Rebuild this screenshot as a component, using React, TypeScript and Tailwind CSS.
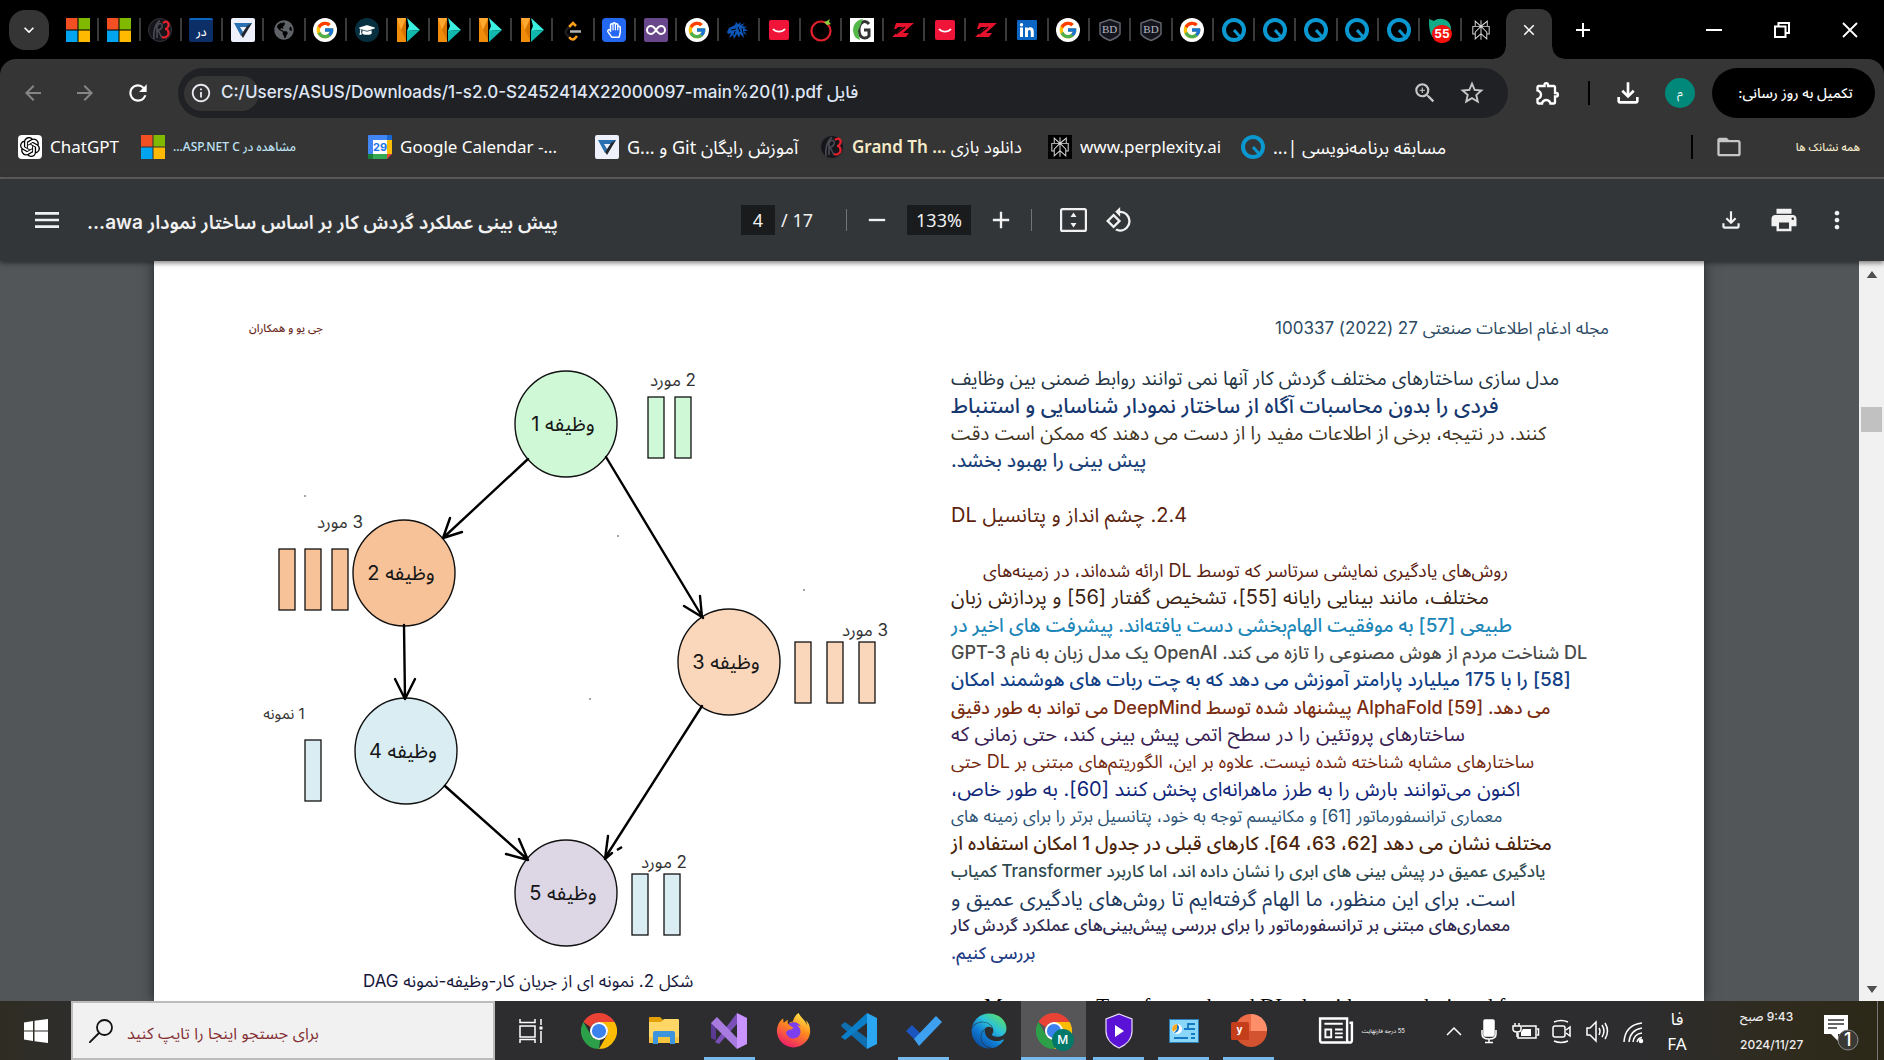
import type { ReactNode } from "react";
import {
  MdArrowBack, MdArrowForward, MdRefresh, MdInfoOutline, MdZoomIn, MdStarBorder, MdOutlineExtension,
  MdOutlineFileDownload, MdPrint, MdMoreVert, MdMenu, MdAdd, MdRemove, MdRotate90DegreesCcw,
  MdFolderOpen, MdClose, MdKeyboardArrowDown,
} from "react-icons/md";
import { FcGoogle } from "react-icons/fc";
import { SiOpenai, SiPerplexity } from "react-icons/si";
import { FaEdge, FaFirefoxBrowser, FaGlobeAmericas, FaGraduationCap, FaRegHandPaper } from "react-icons/fa";

/* ---------- site icons ---------- */

const Microsoft = () => (
  <svg viewBox="0 0 23 23" className="size-6">
    <path fill="#f25022" d="M0 0h11v11H0z" /><path fill="#7fba00" d="M12 0h11v11H12z" />
    <path fill="#00a4ef" d="M0 12h11v11H0z" /><path fill="#ffb900" d="M12 12h11v11H12z" />
  </svg>
);
const Downloads = () => (
  <svg viewBox="0 0 24 24" className="size-6" fill="none">
    <circle cx="12" cy="12" r="11.5" fill="#15151a" stroke="#34343c" />
    <path d="M6 21C5 14 7 6 12 2.500M9 20V8c2-4 6-3 5 1-1 3-3 3-4 3l4 8" stroke="#4a4a54" strokeWidth="1.600" />
    <path d="M15 5c4-3 7 0 5 4-1 2-3 2-3 2 4 0 5 6 1 8-2 1-4 0-4 0" stroke="#e3202b" strokeWidth="2.200" />
  </svg>
);
const Dar = () => (
  <span dir="rtl" className="flex h-6 w-6 items-end justify-center rounded-xs border-t-2 border-[#0a66c2] bg-[#0b2f66] text-xs leading-5 font-medium text-white">در</span>
);
const Virgool = () => (
  <svg viewBox="0 0 24 24" className="size-6">
    <rect width="24" height="24" rx="2" fill="#eef1fb" />
    <path d="M3 5h18l-3 4H9l3 5-2 4z" fill="#2a6fb0" /><path d="M21 5 12 20l-2-3 6-9z" fill="#23272f" />
    <path d="M10 9h5l-3 4z" fill="#eef1fb" />
  </svg>
);
const Globe = () => <FaGlobeAmericas className="size-5 text-[#5f6368]" />;
const Google = () => <span className="flex size-6 items-center justify-center rounded-full bg-white"><FcGoogle className="size-5" /></span>;
const Cap = () => <span className="flex size-6 items-center justify-center rounded-full bg-[#06303f]"><FaGraduationCap className="size-4 text-white" /></span>;
const Play = () => (
  <svg viewBox="0 0 24 24" className="size-6">
    <path fill="#f08c0a" d="M1 0h9v24H1z" /><path fill="#ffa930" d="M1 0h9L5 12z" /><path fill="#d87400" d="M10 2v20L5 12z" />
    <path fill="#3af0e0" d="M11 0l13 12-13 1 2-5z" /><path fill="#10b8ae" d="M24 12 11 24V13z" />
  </svg>
);
const Leet = () => (
  <svg viewBox="0 0 24 24" className="size-6" fill="none" strokeWidth="2.500">
    <path d="M8 9 12 5l3 3" stroke="#ffa116" /><path d="M8 19c3 4 5 3 8-1" stroke="#ffa116" />
    <path d="M8 9c-5 5-4 6 0 10" stroke="#1d1d1d" /><path d="M9 13.500h11" stroke="#b3b3b3" />
  </svg>
);
const Hand = () => <span className="flex size-6 items-center justify-center rounded bg-[#2468f2]"><FaRegHandPaper className="size-4 text-white" /></span>;
const Infinity = () => (
  <svg viewBox="0 0 24 24" className="size-6" fill="none">
    <rect width="24" height="24" rx="2" fill="#68478d" />
    <path d="M12 12c-2-3-3.500-4-5-4a4 4 0 0 0 0 8c1.500 0 3-1 5-4s3.500-4 5-4a4 4 0 0 1 0 8c-1.500 0-3-1-5-4z" stroke="#fff" strokeWidth="2" />
  </svg>
);
const Dragon = () => (
  <svg viewBox="0 0 24 24" className="size-6" fill="#0d56b8">
    <path d="M1 14l2-4 6-3 1-3 2 2 3-2-1 3 5-2-3 3 5 1-3 1 4 3-4 0 3 4-4-2 1 5-4-4-1 4-2-4-3 5-1-4-4 3 2-5-3 1z" />
    <path d="M5 12l5-1M12 9l2 5M16 10l1 5M9 13l-1 4" stroke="#000" strokeWidth="1" />
  </svg>
);
const Smile = () => (
  <svg viewBox="0 0 24 24" className="size-6" fill="none">
    <rect x="2" y="2" width="20" height="20" rx="2" fill="#ef1438" /><path d="M6 11c3 3.500 9 3.500 12 0" stroke="#fff" strokeWidth="1.800" />
  </svg>
);
const Tomato = () => (
  <svg viewBox="0 0 24 24" className="size-6" fill="none">
    <circle cx="12" cy="13" r="9.500" stroke="#e2202c" strokeWidth="2.200" /><path d="M15 4l3 3 4-1-2-2 1-3-3 2z" fill="#8bd23a" />
  </svg>
);
const GreenG = () => (
  <svg viewBox="0 0 24 24" className="size-6" fill="none">
    <path fill="#fff" d="M0 0h24v24H0z" /><path d="M19 6c-4-5-10-2-10 6s6 10 10 6v-6h-5" stroke="#333" strokeWidth="3" />
    <path d="M13 1C4 2 0 12 6 20l4 2-2-9z" fill="#53b848" />
  </svg>
);
const Zed = () => (
  <svg viewBox="0 0 24 24" className="size-6"><path fill="#e5122d" d="M5 5h18l-11 10h6l-3 4H1l11-10H7L5 11H3z" /><path d="M14 9 5 16" stroke="#000" strokeWidth="1.200" /></svg>
);
const LinkedIn = () => (
  <svg viewBox="0 0 24 24" className="size-6">
    <rect x="2" y="2" width="20" height="20" rx="1" fill="#0a66c2" />
    <path fill="#fff" d="M5 9.500h3V19H5zM6.500 5a1.700 1.700 0 1 1 0 3.400 1.700 1.700 0 0 1 0-3.400zM10 9.500h2.800v1.300c1.500-2.400 6-2 6 2.400V19h-3v-5c0-2.600-2.800-2.400-2.800 0v5h-3z" />
  </svg>
);
const Badge = () => (
  <span className="relative flex size-6 items-center justify-center">
    <svg viewBox="0 0 24 24" className="absolute inset-0" fill="#15151d"><path d="M12 1.500 22 5v11c-2 3-6 5-10 6.500C8 21 4 19 2 16V5z" stroke="#62646e" strokeWidth="1.500" /></svg>
    <span className="relative font-[Liberation_Serif,serif] text-[11px] text-[#b9bac6]">BD</span>
  </span>
);
const Quera = () => (
  <svg viewBox="0 0 24 24" className="size-6" fill="none" stroke="#0b98d0" strokeWidth="4">
    <circle cx="12" cy="12" r="10" /><path d="m12 12 8 9" strokeWidth="3" />
  </svg>
);
const Chat55 = () => (
  <span className="relative flex size-6">
    <svg viewBox="0 0 24 24" className="absolute inset-0" fill="#12ab87"><path d="M1 1l5 2c6-5 18-1 17 9-1 9-11 12-17 8-4-3-5-8-5-19z" /></svg>
    <span className="absolute top-[7px] left-1 flex h-[18px] w-5 items-center justify-center rounded-full bg-[#f4100c] text-xs font-bold text-white">55</span>
  </span>
);
const Perplexity = () => <SiPerplexity className="size-5 text-[#dcdcdc]" />;
const ChatGpt = () => <span className="flex size-6 items-center justify-center rounded bg-white"><SiOpenai className="size-5 text-black" /></span>;
const Calendar = () => (
  <span className="relative flex size-6 items-center justify-center">
    <svg viewBox="0 0 24 24" className="absolute inset-0">
      <path fill="#4285f4" d="M0 1q0-1 1-1h18v5H5v14H0z" /><path fill="#1967d2" d="M19 0h4q1 0 1 1v4h-5z" /><path fill="#fbbc04" d="M19 5h5v14h-5z" />
      <path fill="#34a853" d="M5 19h14v5H5z" /><path fill="#188038" d="M0 19h5v5H1q-1 0-1-1z" /><path fill="#ea4335" d="M19 19h5l-5 5z" /><path fill="#fff" d="M5 5h14v14H5z" />
    </svg>
    <span className="relative text-[11px] font-bold text-[#1a73e8]">29</span>
  </span>
);

const tabs: [string, () => ReactNode][] = [
  ["Microsoft", Microsoft], ["Microsoft", Microsoft], ["Downloads", Downloads], ["Dar", Dar], ["Git", Virgool], ["Web", Globe],
  ["Google", Google], ["Course", Cap], ["Play", Play], ["Play", Play], ["Play", Play], ["Play", Play], ["LeetCode", Leet],
  ["Hand", Hand], ["Visual Studio", Infinity], ["Google", Google], ["Dragon", Dragon], ["Smile", Smile], ["Tomato", Tomato],
  ["Green", GreenG], ["Z", Zed], ["Smile", Smile], ["Z", Zed], ["LinkedIn", LinkedIn], ["Google", Google], ["BD", Badge],
  ["BD", Badge], ["Google", Google], ["Quera", Quera], ["Quera", Quera], ["Quera", Quera], ["Quera", Quera], ["Quera", Quera],
  ["Chat", Chat55], ["Perplexity", Perplexity],
];

/* ---------- browser chrome ---------- */

function TabStrip() {
  return (
    <div className="flex h-[59px] items-center">
      <div className="w-[58px] pl-[9px]">
        <button aria-label="Search tabs" className="flex h-10 w-10 items-center justify-center rounded-2xl bg-[#353535] text-white">
          <MdKeyboardArrowDown className="size-5" />
        </button>
      </div>
      <div className="flex min-w-0 flex-1">
        {tabs.map(([name, Icon], i) => (
          <button key={i} aria-label={name} className="flex h-[23px] flex-1 items-center justify-center border-r-2 border-[#3a3a3a] text-white last:border-transparent">
            <Icon />
          </button>
        ))}
      </div>
      <div className="relative ml-[3px] flex w-[46px] items-center justify-center self-stretch">
        <span className="absolute inset-x-0 top-[9px] bottom-0 rounded-t-xl bg-[#353535]" />
        <span className="absolute bottom-0 -left-3 size-3 bg-[radial-gradient(circle_at_0_0,#000_11px,#353535_12px)]" />
        <span className="absolute -right-3 bottom-0 size-3 bg-[radial-gradient(circle_at_100%_0,#000_11px,#353535_12px)]" />
        <button aria-label="Close tab" className="relative text-white"><MdClose className="size-[18px]" /></button>
      </div>
      <button aria-label="New tab" className="flex w-[62px] justify-center text-white"><MdAdd className="size-6" /></button>
      <div className="ml-[66px] flex text-white">
        <button aria-label="Minimize" className="flex h-6 w-[68px] items-center justify-center"><span className="h-0.5 w-4 bg-white" /></button>
        <button aria-label="Restore" className="flex h-6 w-[68px] items-center justify-center">
          <svg viewBox="0 0 16 16" className="size-4" fill="none" stroke="currentColor" strokeWidth="2"><path d="M1 4.500h10.500V15H1zM4.500 4V1H15v10h-3" /></svg>
        </button>
        <button aria-label="Close" className="flex h-6 w-[68px] items-center justify-center">
          <svg viewBox="0 0 16 16" className="size-4" fill="none" stroke="currentColor" strokeWidth="1.800"><path d="m1 1 14 14M15 1 1 15" /></svg>
        </button>
      </div>
    </div>
  );
}

function AddressBar() {
  return (
    <div className="flex h-[68px] items-center pr-[9px] pl-[7px]">
      <button aria-label="Back" className="flex w-[52px] justify-center text-[#868686]"><MdArrowBack className="size-6" /></button>
      <button aria-label="Forward" className="flex w-[52px] justify-center text-[#868686]"><MdArrowForward className="size-6" /></button>
      <button aria-label="Reload" className="flex w-[54px] justify-center text-white"><MdRefresh className="size-[26px]" /></button>
      <div className="ml-[13px] flex h-[50px] min-w-0 flex-1 items-center rounded-full bg-[#202124] pr-[22px] pl-[6px]">
        <span className="-mr-[38px] flex h-[35px] w-[75px] items-center rounded-full bg-[#353535] pl-[6px] text-[#e8eaf0]"><MdInfoOutline className="size-[22px]" /></span>
        <input aria-label="Address" readOnly value="C:/Users/ASUS/Downloads/1-s2.0-S2452414X22000097-main%20(1).pdf فایل"
          className="relative h-10 min-w-0 flex-1 bg-transparent text-[17px] font-medium text-[#dfe6f5] outline-none" />
        <button aria-label="Zoom" className="text-[#c7c7c7]"><MdZoomIn className="size-[26px]" /></button>
        <button aria-label="Bookmark" className="ml-5 text-[#c7c7c7]"><MdStarBorder className="size-7" /></button>
      </div>
      <button aria-label="Extensions" className="flex w-[80px] justify-center text-white"><MdOutlineExtension className="size-7" /></button>
      <span className="h-6 w-0.5 bg-black" />
      <button aria-label="Downloads" className="flex w-[75px] justify-center text-white"><MdOutlineFileDownload className="size-8" /></button>
      <button aria-label="Profile" dir="rtl" className="flex size-[30px] items-center justify-center rounded-full bg-[#00897b] text-xs text-white">م</button>
      <button dir="rtl" className="ml-[17px] flex h-[50px] w-[163px] items-center justify-center rounded-full bg-black pl-1 text-sm font-medium text-white">تکمیل به روز رسانی:</button>
    </div>
  );
}

function Bookmark({ width, icon, children, rtl, text = "text-[17px]" }: { width: string; icon: ReactNode; children: ReactNode; rtl?: boolean; text?: string }) {
  return (
    <a href="#" className={`${width} flex items-center gap-2 whitespace-nowrap text-white`}>
      <span className="shrink-0">{icon}</span>
      <span dir={rtl ? "rtl" : "ltr"} className={`${text} leading-6 font-[Noto_Sans,Noto_Sans_Arabic,sans-serif]`}>{children}</span>
    </a>
  );
}

function Bookmarks() {
  return (
    <nav className="flex h-[52px] items-start border-b-2 border-[#5e5e5e] pt-2 pl-[18px]">
      <Bookmark width="w-[123px]" icon={<ChatGpt />}>ChatGPT</Bookmark>
      <Bookmark width="w-[227px]" icon={<Microsoft />} rtl text="text-xs font-medium text-[#bfe3f5]">مشاهده در ASP.NET C...</Bookmark>
      <Bookmark width="w-[227px]" icon={<Calendar />}>Google Calendar -...</Bookmark>
      <Bookmark width="w-[225px]" icon={<Virgool />} rtl text="text-lg">آموزش رایگان Git و G...{"\u200e"}</Bookmark>
      <Bookmark width="w-[228px]" icon={<Downloads />} rtl>دانلود بازی <span className="font-semibold text-[#f6ebc8]">... Grand Th</span></Bookmark>
      <Bookmark width="w-[193px]" icon={<span className="flex size-6 items-center justify-center bg-black"><Perplexity /></span>}>www.perplexity.ai</Bookmark>
      <Bookmark width="w-[300px]" icon={<Quera />} rtl text="text-lg">مسابقه برنامه‌نویسی |...</Bookmark>
      <div className="mr-6 ml-auto flex h-6 items-center">
        <span className="h-6 w-0.5 bg-black" />
        <MdFolderOpen className="ml-[22px] size-7 text-[#c7c7c7]" />
        <a href="#" dir="rtl" className="ml-[53px] text-[11px] font-medium text-[#f6ebc8]">همه نشانک ها</a>
      </div>
    </nav>
  );
}

function PdfToolbar() {
  return (
    <div className="relative z-10 grid h-[82px] shrink-0 grid-cols-[741px_1fr_auto] items-center bg-[#323639] text-[#f1f1f1] shadow-[0_2px_5px_rgba(0,0,0,0.5)]">
      <div className="flex items-center pl-[31px]">
        <button aria-label="Menu"><MdMenu className="size-8" /></button>
        <h1 dir="rtl" className="ml-6 pt-1.5 text-[19px] font-semibold">پیش بینی عملکرد گردش کار بر اساس ساختار نمودار awa...</h1>
      </div>
      <div className="flex items-center font-[Noto_Sans,sans-serif] text-lg">
        <input aria-label="Page" readOnly value="4" className="h-[30px] w-[34px] bg-[#191b1c] text-center outline-none" />
        <span className="ml-[6px] w-[65px]">/ 17</span>
        <span className="h-[22px] w-px bg-[#71757a]" />
        <button aria-label="Zoom out" className="ml-4"><MdRemove className="size-7" /></button>
        <input aria-label="Zoom level" readOnly value="133%" className="ml-4 h-[30px] w-16 bg-[#191b1c] text-center outline-none" />
        <button aria-label="Zoom in" className="ml-4"><MdAdd className="size-7" /></button>
        <span className="ml-4 h-[22px] w-px bg-[#71757a]" />
        <button aria-label="Fit to page" className="ml-7">
          <svg viewBox="0 0 27 24" className="h-6 w-[27px]" fill="none" stroke="currentColor" strokeWidth="2.200">
            <rect x="1.100" y="1.100" width="24.800" height="21.800" rx="1.500" /><path d="M13.500 4.500 10.500 9h6zM13.500 19.500l-3-4.500h6z" fill="currentColor" stroke="none" />
          </svg>
        </button>
        <button aria-label="Rotate" className="ml-[18px]"><MdRotate90DegreesCcw className="size-7" /></button>
      </div>
      <div className="mr-[21px] flex items-center">
        <button aria-label="Download" className="flex w-[53px] justify-center"><MdOutlineFileDownload className="size-[26px]" /></button>
        <button aria-label="Print" className="flex w-[53px] justify-center"><MdPrint className="size-[30px]" /></button>
        <button aria-label="More" className="flex w-[53px] justify-center"><MdMoreVert className="size-7" /></button>
      </div>
    </div>
  );
}

/* ---------- document ---------- */

const nodes = [
  { n: 1, x: 566, y: 424, fill: "#cff8d6" }, { n: 2, x: 404, y: 573, fill: "#f8c298" }, { n: 3, x: 729, y: 662, fill: "#fad6bb" },
  { n: 4, x: 406, y: 751, fill: "#d9edf3" }, { n: 5, x: 566, y: 893, fill: "#dcd6e5" },
];
const bars = [
  { y: 397, fill: "#cff8d6", xs: [648, 675] }, { y: 549, fill: "#f8c298", xs: [279, 305, 332] },
  { y: 642, fill: "#fad6bb", xs: [795, 827, 859] }, { y: 740, fill: "#d9edf3", xs: [305] }, { y: 874, fill: "#d9edf3", xs: [632, 664] },
];
const arrows = [
  "M528 459 443 538M450 518l-7 20 19-6", "M606 457l97 161M684 606l18 11-2-21", "M404 625l1 74M395 679l10 20 10-20",
  "M702 706 605 858M608 836l-3 23 7-6", "M445 786l82 73M519 839l9 21-22-6",
];
const captions = [
  { t: "2 مورد", x: 673, y: 386, s: "text-[17px]" }, { t: "3 مورد", x: 340, y: 528, s: "text-[17px]" },
  { t: "3 مورد", x: 865, y: 636, s: "text-[17px]" }, { t: "1 نمونه", x: 284, y: 719, s: "text-[15px]" }, { t: "2 مورد", x: 664, y: 868, s: "text-[17px]" },
];

function Figure() {
  return (
    <figure className="w-[795px] shrink-0">
      <svg viewBox="154 342 795 620" className="h-[620px] w-[795px]">
        {bars.map((b) => b.xs.map((x) => <rect key={`${x}-${b.y}`} x={x} y={b.y} width="16" height="61" fill={b.fill} stroke="#111" strokeWidth="1.300" />))}
        {nodes.map((c) => (
          <g key={c.n}>
            <ellipse cx={c.x} cy={c.y} rx="51" ry="53" fill={c.fill} stroke="#111" strokeWidth="1.400" />
            <text x={c.x - 3} y={c.y + 7} textAnchor="middle" direction="rtl" className="fill-[#151515] text-xl">{`وظیفه ${c.n}`}</text>
          </g>
        ))}
        {arrows.map((d) => <path key={d} d={d} fill="none" stroke="#000" strokeWidth="2.400" strokeLinecap="round" strokeLinejoin="round" />)}
        <path d="M617 850l5-3" stroke="#000" strokeWidth="2.500" />
        {[[305, 496], [618, 536], [804, 590], [590, 699]].map(([x, y]) => <circle key={x} cx={x} cy={y} r="1" fill="#888" />)}
        {captions.map((c) => <text key={`${c.x}`} x={c.x} y={c.y} textAnchor="middle" direction="rtl" className={`${c.s} fill-[#333]`}>{c.t}</text>)}
      </svg>
      <figcaption dir="rtl" className="pl-[209px] text-left text-[17px] leading-[38px] text-[#16163a]">شکل 2. نمونه ای از جریان کار-وظیفه-نمونه DAG</figcaption>
    </figure>
  );
}

const intro = [
  ["text-[19px] text-[#243443]", "مدل سازی ساختارهای مختلف گردش کار آنها نمی توانند روابط ضمنی بین وظایف"],
  ["text-[21px] font-medium text-[#17376f]", "فردی را بدون محاسبات آگاه از ساختار نمودار شناسایی و استنباط"],
  ["text-[19px] text-[#3f3322]", "کنند. در نتیجه، برخی از اطلاعات مفید را از دست می دهند که ممکن است دقت"],
  ["text-[19px] font-medium text-[#1b3f77]", "پیش بینی را بهبود بخشد."],
];
const body = [
  ["text-[18px] text-[#5a1c10] pl-8", "روش‌های یادگیری نمایشی سرتاسر که توسط DL ارائه شده‌اند، در زمینه‌های"],
  ["text-[20px] text-[#3b2413]", "مختلف، مانند بینایی رایانه [55]، تشخیص گفتار [56] و پردازش زبان"],
  ["text-[19px] font-medium text-[#1c86b8]", "طبیعی [57] به موفقیت الهام‌بخشی دست یافته‌اند. پیشرفت های اخیر در"],
  ["text-[18px] font-medium text-[#4a4a48]", "DL شناخت مردم از هوش مصنوعی را تازه می کند. OpenAI یک مدل زبان به نام GPT-3"],
  ["text-[19px] font-medium text-[#123f86]", "[58] را با 175 میلیارد پارامتر آموزش می دهد که به چت ربات های هوشمند امکان"],
  ["text-[18px] font-medium text-[#7a2c10]", "می دهد. AlphaFold [59] پیشنهاد شده توسط DeepMind می تواند به طور دقیق"],
  ["text-[20px] text-[#3a1d52]", "ساختارهای پروتئین را در سطح اتمی پیش بینی کند، حتی زمانی که"],
  ["text-[18px] text-[#74290f]", "ساختارهای مشابه شناخته شده نیست. علاوه بر این، الگوریتم‌های مبتنی بر DL حتی"],
  ["text-[20px] text-[#10267a]", "اکنون می‌توانند بارش را به طرز ماهرانه‌ای پخش کنند [60]. به طور خاص،"],
  ["text-[17px] text-[#2b5273]", "معماری ترانسفورماتور [61] و مکانیسم توجه به خود، پتانسیل برتر را برای زمینه های"],
  ["text-[19px] font-medium text-[#4b240b]", "مختلف نشان می دهد [62، 63، 64]. کارهای قبلی در جدول 1 امکان استفاده از"],
  ["text-[17px] font-medium text-[#2f4a4f]", "یادگیری عمیق در پیش بینی های ابری را نشان داده اند، اما کاربرد Transformer کمیاب"],
  ["text-[21px] text-[#1f3a5f]", "است. برای این منظور، ما الهام گرفته‌ایم تا روش‌های یادگیری عمیق و"],
  ["text-[17px] font-medium text-[#30284f]", "معماری‌های مبتنی بر ترانسفورماتور را برای بررسی پیش‌بینی‌های عملکرد گردش کار"],
  ["text-[17px] font-medium text-[#1f3c86]", "بررسی کنیم."],
];

function Lines({ rows }: { rows: string[][] }) {
  return rows.map(([style, text]) => <p key={text} dir="rtl" className={`${style} self-center text-left leading-[27px] whitespace-nowrap`}>{text}</p>);
}

function Document() {
  return (
    <main className="flex min-h-0 flex-1 bg-[#525659]">
      <article className="mr-[155px] ml-[154px] min-w-0 flex-1 overflow-hidden bg-white pt-[54px] shadow-[0_0_12px_rgba(0,0,0,0.6)]">
        <header className="flex h-[27px] items-center justify-between px-[95px]">
          <span dir="rtl" className="text-[11px] font-medium text-[#6b2a22]">جی یو و همکاران</span>
          <span dir="rtl" className="text-[17px] text-[#2c4a63]">مجله ادغام اطلاعات صنعتی 27 (2022) 100337</span>
        </header>
        <div className="flex">
          <Figure />
          <section className="pt-[23px] pl-0.5">
            <div className="grid h-[109px] auto-rows-fr"><Lines rows={intro} /></div>
            <h2 dir="rtl" className="mt-7 text-left text-[20px] leading-[27px] text-[#5b1f0e]">2.4. چشم انداز و پتانسیل DL</h2>
            <div className="mt-7 grid h-[410px] auto-rows-fr"><Lines rows={body} /></div>
            <p className="mt-[26px] pl-[33px] font-[Liberation_Serif,serif] text-[21px] leading-[27px] font-medium whitespace-nowrap text-black">More recent, Transformer-based DL algorithms are designed for</p>
          </section>
        </div>
      </article>
      <div className="flex w-[25px] flex-col items-center justify-between bg-[#f1f1f1] py-2">
        <svg viewBox="0 0 12 8" className="mt-[2px] h-[7px] w-3 fill-[#505050]"><path d="M6 0l6 8H0z" /></svg>
        <span className="-mt-[426px] h-[25px] w-[21px] bg-[#c1c1c1]" />
        <svg viewBox="0 0 12 8" className="h-[7px] w-3 fill-[#505050]"><path d="M6 8 0 0h12z" /></svg>
      </div>
    </main>
  );
}

/* ---------- taskbar ---------- */

const Chrome = () => (
  <svg viewBox="0 0 48 48" className="size-9">
    <path fill="#ea4335" d="M24 0c9 0 16.700 5 20.800 12H24c-5 0-9 3-11 7L3.200 12C7.300 5 15 0 24 0z" />
    <path fill="#fbbc05" d="M44.800 12A24 24 0 0 1 24 48l10.400-18c2-3.500 2-9-1.400-12l-9-6z" />
    <path fill="#2c9f49" d="M3.200 12 13.600 30c2 4 7 6.500 12 5.800L24 48A24 24 0 0 1 3.200 12z" />
    <circle cx="24" cy="24" r="12" fill="#fff" /><circle cx="24" cy="24" r="9.500" fill="#3b82ee" />
  </svg>
);
const Explorer = () => (
  <svg viewBox="0 0 32 28" className="h-7 w-8">
    <path fill="#e3a007" d="M1 1q0-1 1-1h10l3 3v4H1z" /><path fill="#ffd766" d="M1 5h12l3-3h14q1 0 1 1v22q0 1-1 1H1z" />
    <path fill="#f5c443" d="M1 20h30v6H1z" /><path fill="#3d95dc" d="M5 27V16q0-2 2-2h18q2 0 2 2v11h-5v-7H10v7z" />
  </svg>
);
const VisualStudio = () => (
  <svg viewBox="0 0 36 36" className="size-9">
    <path fill="#5b3a94" d="M0 10l4-3 1 1v18l-1 1-4-2z" /><path fill="#7a50b8" d="M4 29 26 0v11L8 31z" />
    <path fill="#a77be0" d="M0 10l6-6 20 21v11L1 11z" /><path fill="#c994ff" d="M26 0l10 5v26l-10 5z" />
  </svg>
);
const Firefox = () => (
  <svg viewBox="0 0 36 36" className="size-9">
    <defs><linearGradient id="ff" x1="0.8" y1="0" x2="0.3" y2="1"><stop offset="0" stopColor="#fff04a" /><stop offset="0.45" stopColor="#ff8a1e" /><stop offset="1" stopColor="#ee1a6b" /></linearGradient></defs>
    <circle cx="18" cy="19" r="10" fill="#7b3ff0" /><FaFirefoxBrowser size={35} fill="url(#ff)" />
  </svg>
);
const VsCode = () => (
  <svg viewBox="0 0 36 36" className="size-9">
    <path fill="#0f6fb0" d="M0 12l4-3 22 16v11L1 14z" /><path fill="#0a7ec9" d="M0 24 26 0v10L4 27z" /><path fill="#2aa7f0" d="M26 0l10 5v26l-10 5z" />
  </svg>
);
const Todo = () => (
  <svg viewBox="0 0 36 30" className="h-8 w-9"><path fill="#1a56bd" d="M0 15l6-6 9 9-6 6z" /><path fill="#3ea0f0" d="M8 23 30 0l6 6-23 24z" /></svg>
);
const Edge = () => (
  <svg viewBox="0 0 36 36" className="size-9">
    <defs><linearGradient id="ed" x1="1" y1="0.1" x2="0.3" y2="1"><stop offset="0" stopColor="#5fe05a" /><stop offset="0.4" stopColor="#2bc0dc" /><stop offset="0.7" stopColor="#0f7bd4" /><stop offset="1" stopColor="#0c50a0" /></linearGradient></defs>
    <FaEdge size={36} fill="url(#ed)" />
  </svg>
);
const ChromeM = () => (
  <span className="relative flex"><Chrome /><span className="absolute top-4 left-4 flex size-[22px] items-center justify-center rounded-full bg-[#00796b] text-xs font-medium text-white">M</span></span>
);
const Shield = () => (
  <svg viewBox="0 0 30 36" className="h-9 w-[30px]"><path fill="#5a12d6" stroke="#e8defa" strokeWidth="1.200" d="M15 1l13 5v12c0 8-6 14-13 17C8 32 2 26 2 18V6z" /><path fill="#fff" d="M11 12l9 6-9 6z" /></svg>
);
const Control = () => (
  <svg viewBox="0 0 30 24" className="h-6 w-[30px]">
    <rect x="0.500" y="0.500" width="29" height="23" fill="#8bd7fa" stroke="#2c7fb8" /><circle cx="8" cy="10" r="5" fill="#fff" /><path fill="#f5a623" d="M8 10V5a5 5 0 0 0-4 8z" /><path fill="#1579c4" d="M8 5a5 5 0 0 1-3 9l3-4z" />
    <path d="M15 10h4V5h7M19 10h7M5 19h14M22 15h4M22 19h4" stroke="#1579c4" strokeWidth="1.800" fill="none" />
  </svg>
);
const PowerPoint = () => (
  <span className="relative flex">
    <svg viewBox="0 0 36 34" className="h-[34px] w-9">
      <path fill="#ff8f6b" d="M20 0a16 16 0 0 1 16 17H20z" /><path fill="#ed6c47" d="M20 0v17H4A16 16 0 0 1 20 0z" /><path fill="#d35230" d="M4 17h32a16 16 0 0 1-32 0z" /><rect x="0" y="8" width="18" height="18" rx="1.500" fill="#c43e1c" />
    </svg>
    <span className="absolute top-2 left-1.5 text-[10px] font-bold text-white">y</span>
  </span>
);

const apps: [string, () => ReactNode, string][] = [
  ["Chrome", Chrome, ""], ["File Explorer", Explorer, ""], ["Visual Studio", VisualStudio, "w-[51px]"], ["Firefox", Firefox, ""],
  ["VS Code", VsCode, ""], ["To Do", Todo, "w-[51px]"], ["Edge", Edge, ""], ["Chrome profile", ChromeM, "w-full"],
  ["VPN", Shield, "w-[51px]"], ["Control Panel", Control, "w-[51px]"], ["PowerPoint", PowerPoint, "w-[51px]"],
];

function Tray() {
  return (
    <div className="ml-auto flex items-center text-white">
      <svg viewBox="0 0 36 28" className="h-[27px] w-9" fill="none" stroke="currentColor" strokeWidth="2.500">
        <path d="M1.500 24V1.500h28V24q0 2.500 2.500 2.500H4q-2.500 0-2.500-2.500zM32 6h2.500v18q0 2.500-2.500 2.500" /><path d="M6 7h19M17 13h8M17 17h8M17 21h8" strokeWidth="2" /><path d="M7 13h6v8H7z" strokeWidth="2" />
      </svg>
      <span dir="rtl" className="ml-3 w-[39px] text-left text-[6px] whitespace-nowrap">55 درجه فارنهایت</span>
      <svg viewBox="0 0 16 10" className="ml-[41px] h-2.5 w-4" fill="none" stroke="currentColor" strokeWidth="1.500"><path d="M1 9l7-7 7 7" /></svg>
      <div className="ml-[9px] flex items-center">
        <svg viewBox="0 0 36 28" className="h-7 w-9" fill="none" stroke="currentColor" strokeWidth="1.500"><rect x="13" y="3" width="10" height="16" rx="1" fill="currentColor" /><path d="M11 13v4q0 5 7 5t7-5v-4M18 22v3M14 25.500h8" /></svg>
        <svg viewBox="0 0 36 28" className="h-7 w-9" fill="none" stroke="currentColor" strokeWidth="1.500"><path d="M15 9h14v12H11v-5M30 12h1.500v6H30" /><path d="M16 12h8v7H14v-4z" fill="currentColor" stroke="none" /><path d="M8 6v3M12 6v3M6 9h8v3q0 3-4 3t-4-3zM10 15v5" /></svg>
        <svg viewBox="0 0 36 28" className="h-7 w-9" fill="none" stroke="currentColor" strokeWidth="1.500"><rect x="10" y="9" width="12" height="11" rx="2" /><path d="M23 13l4-3v9l-4-3M11 5q7-3 14 0M11 24q7 3 14 0" /></svg>
        <svg viewBox="0 0 36 28" className="h-7 w-9" fill="none" stroke="currentColor" strokeWidth="1.500"><path d="M8 11h3l6-6v19l-6-6H8zM20 11q2 3 0 7M23 8q4 6 0 12M26 6q5 8 0 16" /></svg>
        <svg viewBox="0 0 36 28" className="h-7 w-9" fill="none" stroke="currentColor" strokeWidth="1.500"><path d="M9 25Q10 8 27 6M14 25q1-12 13-14M18 25q1-8 9-9M22 25q1-4 5-4.500" /><circle cx="26" cy="24" r="1.500" fill="currentColor" /></svg>
      </div>
      <div className="flex w-[52px] flex-col items-center font-[Noto_Sans,Noto_Sans_Arabic,sans-serif] text-[17px] leading-[25px]"><span dir="rtl">فا</span><span>FA</span></div>
      <div className="ml-[37px] flex w-[70px] flex-col text-left text-xs leading-7 font-medium whitespace-nowrap text-[#eeeeee]"><span dir="rtl" className="text-left">9:43 صبح</span><span>2024/11/27</span></div>
      <button aria-label="Notifications" className="relative ml-[14px] h-10 w-9">
        <svg viewBox="0 0 36 40" className="absolute inset-0"><path fill="#fff" d="M0 4h24v19H14v7l-7-7H0z" /><path d="M4 9h16M4 13h16M4 17h9" stroke="#333" strokeWidth="1.500" /><circle cx="24" cy="29" r="10" fill="#3a3934" stroke="#888" /></svg>
        <span className="absolute top-[17px] left-[20px] text-lg leading-6 font-medium">1</span>
      </button>
      <span className="mr-[6px] ml-[17px] h-[59px] w-px bg-[#777]" />
    </div>
  );
}

function Taskbar() {
  return (
    <footer className="relative z-10 flex h-[59px] shrink-0 items-center bg-[linear-gradient(90deg,#2f2d22_0,#2d2d2f_90px,#2d2d2f_1640px,#2f2b1e_1780px,#2c2818_100%)]">
      <button aria-label="Start" className="flex w-[71px] justify-center">
        <svg viewBox="0 0 24 24" className="size-6 fill-white"><path d="M0 3.500 9 2v9.500H0zM10.500 1.800 24 0v11.500H10.500zM0 12.500h9V22l-9-1.500zM10.500 12.500H24V24l-13.500-1.800z" /></svg>
      </button>
      <label className="flex h-[59px] w-[424px] items-center border-2 border-[#bcbcbc] bg-[#f1f1f1] pl-4">
        <svg viewBox="0 0 24 24" className="size-6" fill="none" stroke="#111" strokeWidth="1.800"><circle cx="15.500" cy="8.500" r="7.500" /><path d="M10 14 0 24" /></svg>
        <input dir="rtl" aria-label="Search" placeholder="برای جستجو اینجا را تایپ کنید" className="ml-[14px] h-8 min-w-0 flex-1 bg-transparent pt-1 text-left text-base outline-none placeholder:text-[#842f31]" />
      </label>
      <button aria-label="Task view" className="flex w-[72px] justify-center">
        <svg viewBox="0 0 24 24" className="size-6" fill="none" stroke="#fff" strokeWidth="1.500"><path d="M1 7h15v11H1zM1 0v3.500h15V0M1 24v-3.500h15V24M22 0v6M22 12v12" /><path d="M20.500 7.500h3v3h-3z" fill="#fff" stroke="none" /></svg>
      </button>
      <div className="flex w-[714px] self-stretch">
        {apps.map(([name, Icon, bar]) => (
          <button key={name} aria-label={name} className={`relative flex flex-1 items-center justify-center ${bar === "w-full" ? "bg-[#565658]" : ""}`}>
            <Icon />
            {bar && <span className={`absolute bottom-0 h-[3px] bg-[#76b9ed] ${bar}`} />}
          </button>
        ))}
      </div>
      <Tray />
    </footer>
  );
}

export default function App() {
  return (
    <div className="flex h-screen flex-col overflow-hidden bg-black font-[Inter,Noto_Sans_Arabic,Noto_Sans,sans-serif]">
      <TabStrip />
      <div className="rounded-t-2xl bg-[#353535]"><AddressBar /><Bookmarks /></div>
      <PdfToolbar />
      <Document />
      <Taskbar />
    </div>
  );
}
